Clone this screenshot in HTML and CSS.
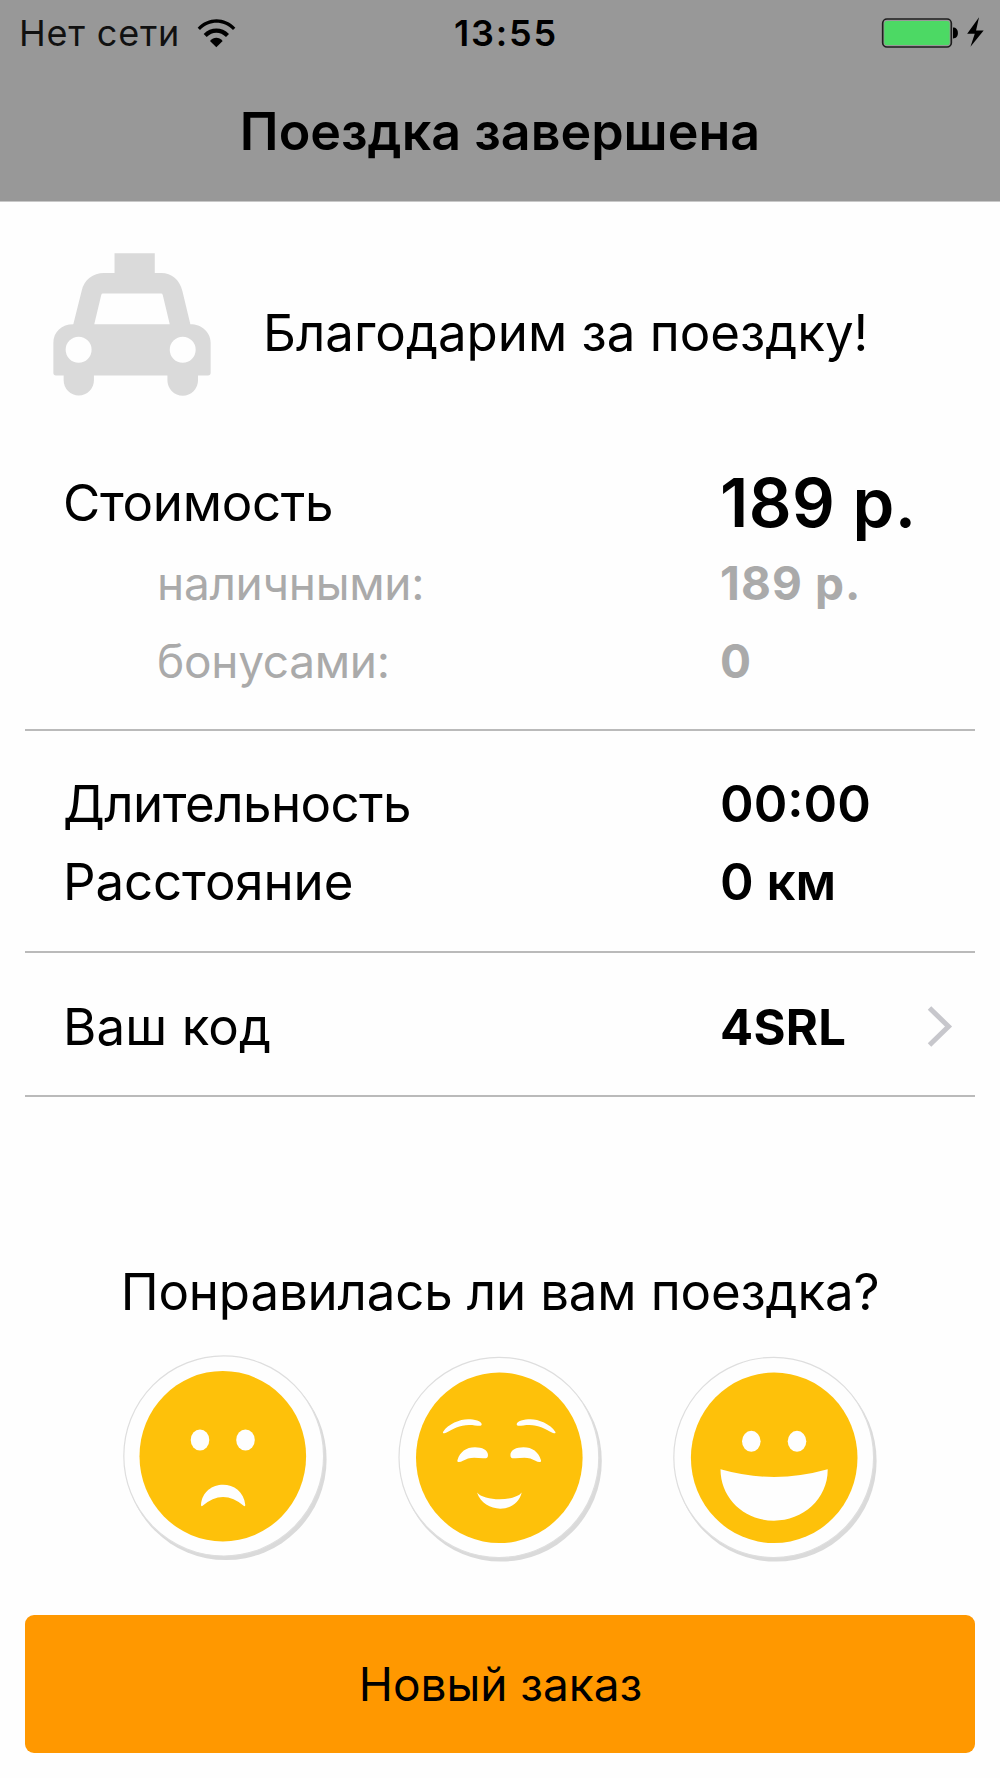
FILE: index.html
```html
<!DOCTYPE html>
<html lang="ru">

<head>
  <meta charset="UTF-8">
  <meta name="viewport" content="width=device-width, initial-scale=1.0">
  <title>Поездка завершена</title>
  <link rel="stylesheet" href="styles.css">
</head>

<body>
  <header class="header">
    <div class="status-bar">
      <div class="network">
        <span class="carrier">Нет сети</span>
        <svg class="wifi" viewBox="591 48 117 90">
          <path d="M593 77C624 43 675 43 706 77L699 84C670 55 629 55 600 84Z" />
          <path d="M611 96C632 74 666 74 687 96L678 105C661 88 637 88 620 105Z" />
          <path d="M630 117C641 104 657 104 668 117L649 136Z" />
        </svg>
      </div>
      <div class="time">13:55</div>
      <svg class="battery" viewBox="1140 45 320 100">
        <rect x="1146" y="54" width="208" height="85" rx="13" fill="none" stroke="#1e1e1e" stroke-width="5" />
        <rect x="1151" y="60" width="198" height="73" rx="8" fill="#4cd964" />
        <path d="M1359 80C1368 80 1374 86 1374 96.500C1374 107 1368 113 1359 113Z" />
        <path d="M1438 49L1402 99H1425L1412 138L1452 89H1429Z" />
      </svg>
    </div>
    <h1 class="title">Поездка завершена</h1>
  </header>

  <main>
    <div class="thanks">
      <svg class="taxi" viewBox="159 68 475 430">
        <path fill-rule="evenodd" d="M344 69H465V128H485C515 128 540 148 548 182L572 282C605 282 633 305 633 338V428Q633 436 625 436H595V451A46 46 0 0 1 503 451V436H282V451A45.500 45.500 0 0 1 191 451V436H168Q160 436 160 428V338C160 305 185 282 220 282L245 182C252 148 280 128 312 128H344Z
          M309 190Q305 190 304 194L283 282H510L489 194Q488 190 484 190Z
          M197 359A39 39 0 1 0 275 359A39 39 0 1 0 197 359Z
          M510 359A39 39 0 1 0 588 359A39 39 0 1 0 510 359Z" />
      </svg>
      <span class="thanks-text">Благодарим за поездку!</span>
    </div>

    <section class="group cost">
      <div class="row total">
        <span class="label">Стоимость</span>
        <span class="value">189 р.</span>
      </div>
      <div class="row sub">
        <span class="label">наличными:</span>
        <span class="value">189 р.</span>
      </div>
      <div class="row sub">
        <span class="label">бонусами:</span>
        <span class="value">0</span>
      </div>
    </section>

    <section class="group trip">
      <div class="row duration">
        <span class="label">Длительность</span>
        <span class="value">00:00</span>
      </div>
      <div class="row distance">
        <span class="label">Расстояние</span>
        <span class="value">0 км</span>
      </div>
    </section>

    <section class="group code">
      <div class="row">
        <span class="label">Ваш код</span>
        <span class="value">4SRL</span>
        <svg class="chevron" viewBox="0 0 26 42">
          <path d="M2.500 2L21.500 20.500L2.500 39" />
        </svg>
      </div>
    </section>

    <h2 class="question">Понравилась ли вам поездка?</h2>

    <div class="faces">
      <!-- bad -->
      <svg class="face" viewBox="0 0 206 208">
        <ellipse class="shadow" cx="102.900" cy="105.400" rx="100.700" ry="100.700" />
        <ellipse class="rim" cx="100.700" cy="101.900" rx="99.900" ry="100.100" />
        <ellipse class="skin" cx="99.800" cy="102.200" rx="83.300" ry="85.300" />
        <ellipse cx="77" cy="86" rx="9.300" ry="10.500" />
        <ellipse cx="122.500" cy="86" rx="9.300" ry="10.500" />
        <path d="M78 151C80 124 120 124 122.300 151Q122.300 152.500 121 152Q100 134 79.300 152Q78 152.500 78 151Z" />
      </svg>
      <!-- normal -->
      <svg class="face" viewBox="0 0 206 208">
        <ellipse class="shadow" cx="103.100" cy="106.900" rx="100.700" ry="100.700" />
        <ellipse class="rim" cx="100.900" cy="103.400" rx="99.900" ry="100.100" />
        <ellipse class="skin" cx="101.300" cy="103.800" rx="83.300" ry="85.300" />
        <g id="eye">
          <path d="M45 78C50 70 62 65.300 70 65.300C76 65.300 84 67 83.700 70.500C83.500 73 78 71 71 71C62 71 54 75.500 49 78.300C46 80 44.500 79.500 45 78Z" />
          <path d="M59.500 106C62 98 68 93.300 77 93.300C84 93.300 90 96 90 101C90 104.500 88 104.500 85 104.300C80 104 75 103 70 104.500C66 106 63.500 108 61 108C59.500 108 59 107.500 59.500 106Z" />
        </g>
        <use href="#eye" transform="translate(202.400 0) scale(-1 1)" />
        <path d="M79 138.500C86 147.500 117 147.500 123.700 138.500C119 160 86 160 79 138.500Z" />
      </svg>
      <!-- good -->
      <svg class="face" viewBox="0 0 206 208">
        <ellipse class="shadow" cx="102.900" cy="106.900" rx="100.700" ry="100.700" />
        <ellipse class="rim" cx="100.700" cy="103.400" rx="99.900" ry="100.100" />
        <ellipse class="skin" cx="101.200" cy="103.800" rx="83.300" ry="85.300" />
        <ellipse cx="78.300" cy="87.300" rx="9.300" ry="10.500" />
        <ellipse cx="124" cy="87.300" rx="9.300" ry="10.500" />
        <path d="M47.500 115.300Q101 130.500 154.700 115.300C155 145 130 166.700 101 166.700C72 166.700 47.500 145 47.500 115.300Z" />
      </svg>
    </div>

    <button class="new-order">Новый заказ</button>
  </main>
</body>

</html>
```
FILE: styles.css
```css
* {
  margin: 0;
  padding: 0;
  box-sizing: border-box;
}

body {
  width: 1000px;
  height: 1778px;
  background: #fefefe;
  color: #000;
  font-family: Inter, "Open Sans", sans-serif;
  font-size: 51px;
}

svg {
  display: block;
  flex-shrink: 0;
}

/* header */
.header {
  height: 202px;
  background: #989898;
  border-bottom: 1px solid #c8c8c8;
}

.status-bar {
  display: grid;
  grid-template-columns: 435px 1fr auto;
  align-items: center;
  height: 64px;
  padding: 0 13px 0 19px;
  font-size: 36px;
  line-height: 64px;
}

.network {
  display: flex;
  align-items: center;
}

.carrier {
  width: 178px;
  letter-spacing: 0.8px;
  color: #111;
}

.wifi {
  width: 39px;
  height: 30px;
}

.time {
  padding-top: 1px;
  font-weight: 600;
  letter-spacing: 1.8px;
}

.battery {
  width: 107px;
  height: 33px;
}

.title {
  font-size: 52px;
  font-weight: 600;
  line-height: 136px;
  text-align: center;
}

/* thanks */
.thanks {
  display: flex;
  height: 260px;
  padding-left: 53px;
}

.taxi {
  width: 158px;
  height: 143px;
  margin-top: 51px;
  fill: #dadada;
}

.thanks-text {
  margin-left: 52px;
  line-height: 262px;
}

/* rows */
.group {
  margin: 0 25px;
  border-bottom: 2px solid #bababa;
}

.row {
  display: grid;
  grid-template-columns: 657px 1fr auto;
  align-items: center;
  height: 78px;
  padding-left: 38px;
  line-height: 78px;
}

.label {
  letter-spacing: -0.3px;
}

.value {
  font-size: 51px;
  font-weight: 600;
}

.total {
  height: 82px;
}

.total .value {
  font-size: 67px;
  letter-spacing: 0.4px;
}

.sub {
  color: #aaa;
  font-size: 46px;
}

.sub .label {
  padding-left: 94px;
}

.sub .value {
  font-size: 46px;
  font-weight: 700;
  letter-spacing: 1.1px;
}

.cost {
  padding-bottom: 29px;
}

.trip {
  padding: 34px 0 30px;
}

.duration .label {
  letter-spacing: -0.55px;
}

.distance .label {
  letter-spacing: -0.1px;
}

.code {
  padding: 34px 0 30px;
}

.code .label {
  letter-spacing: 0.1px;
}

.code .value {
  padding-top: 2px;
  font-size: 49px;
  font-weight: 700;
  letter-spacing: 0.3px;
}

.chevron {
  width: 26px;
  height: 42px;
  margin-right: 22px;
  fill: none;
  stroke: #c7c7cc;
  stroke-width: 5;
}

/* rating */
.question {
  margin-top: 161px;
  font-size: 51px;
  font-weight: 400;
  line-height: 68px;
  letter-spacing: -0.15px;
  text-align: center;
}

.faces {
  display: flex;
  gap: 69px;
  margin: 28px 0 0 123px;
}

.face {
  width: 206px;
  height: 208px;
  fill: #fefefe;
}

.shadow {
  fill: #dadada;
}

.rim {
  stroke: #dedede;
  stroke-width: 1.2;
}

.skin {
  fill: #fec10a;
}

.new-order {
  display: block;
  width: 950px;
  height: 138px;
  margin: 53px 25px 0;
  padding-left: 1px;
  border: none;
  border-radius: 9px;
  background: #ff9800;
  color: #000;
  font-family: inherit;
  font-size: 46px;
  letter-spacing: -0.05px;
}
```
